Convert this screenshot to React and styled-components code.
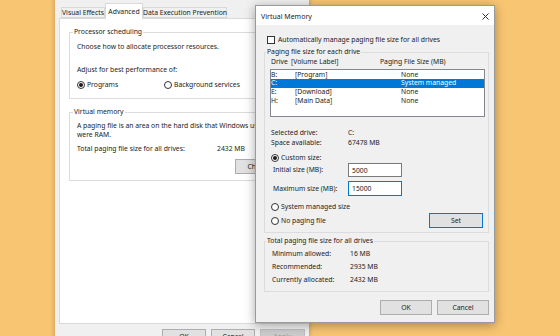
import React from 'react';
import styled, { createGlobalStyle } from 'styled-components';

const GlobalStyle = createGlobalStyle`
  html, body { margin: 0; padding: 0; }
  body {
    width: 560px;
    height: 336px;
    overflow: hidden;
    background: #F8C572;
    font-family: "Noto Sans", "Liberation Sans", sans-serif;
    font-size: 6.8px;
    color: #1b1b1b;
  }
  * { box-sizing: border-box; }
`;

const Desktop = styled.div`
  position: relative;
  width: 560px;
  height: 336px;
  overflow: hidden;
`;

// System Properties window (behind)
const BackWindow = styled.div`
  position: absolute;
  left: 55px;
  top: -10px;
  width: 254px;
  height: 380px;
  padding-top: 13px;
  background: #F0F0F0;
  box-shadow: 0 0 5px rgba(0, 0, 0, 0.25);
`;

const TabStrip = styled.div`
  display: flex;
  align-items: flex-end;
  height: 15px;
  margin-left: 6px;
  position: relative;
  z-index: 1;
`;

const Tab = styled.div`
  width: ${p => p.$w}px;
  height: ${p => (p.$active ? 16 : 11)}px;
  margin-bottom: ${p => (p.$active ? -1 : 0)}px;
  border: 1px solid #D9D9D9;
  border-bottom: ${p => (p.$active ? 'none' : '1px solid #D9D9D9')};
  background: ${p => (p.$active ? '#FFFFFF' : '#F0F0F0')};
  display: flex;
  align-items: center;
  justify-content: center;
  line-height: 9px;
  white-space: nowrap;
`;

const Panel = styled.div`
  margin-left: 4px;
  width: 249px;
  height: 306px;
  padding: 8px 9px 0;
  background: #FFFFFF;
  border: 1px solid #D9D9D9;
`;

const Group = styled.fieldset`
  margin: ${p => p.$top || 0}px 0 0;
  padding: 0 ${p => p.$right || 7}px ${p => p.$bottom || 8}px ${p => p.$left || 7}px;
  border: 1px solid #DCDCDC;
  min-width: 0;
`;

const Legend = styled.legend`
  margin-left: ${p => p.$shift || -4}px;
  padding: 0 1px;
  line-height: 10px;
`;

const Line = styled.div`
  margin-top: ${p => p.$top || 0}px;
  line-height: ${p => p.$lh || 10}px;
  padding-left: ${p => p.$indent || 0}px;
  white-space: nowrap;
`;

const Row = styled.div`
  display: grid;
  grid-template-columns: ${p => p.$cols};
  align-items: center;
  margin-top: ${p => p.$top || 0}px;
  padding-left: ${p => p.$indent || 0}px;
  line-height: 10px;
  height: ${p => p.$h || 10}px;
  white-space: nowrap;
`;

const RadioLabel = styled.label`
  display: flex;
  align-items: center;
  gap: 2px;
  white-space: nowrap;
`;

const Radio = styled.span`
  width: 8px;
  height: 8px;
  border-radius: 50%;
  border: 1px solid #333333;
  background: #FFFFFF;
  display: flex;
  align-items: center;
  justify-content: center;
  &::after {
    content: '';
    width: 4px;
    height: 4px;
    border-radius: 50%;
    background: ${p => (p.$on ? '#1b1b1b' : 'transparent')};
  }
`;

const Check = styled.span`
  width: 8px;
  height: 8px;
  border: 1px solid #333333;
  background: #FFFFFF;
`;

const ButtonRow = styled.div`
  display: flex;
  justify-content: flex-end;
  align-items: center;
  gap: 5px;
  margin-top: ${p => p.$top || 0}px;
  padding-right: ${p => p.$right || 0}px;
`;

const Button = styled.div`
  width: ${p => p.$w || 52}px;
  height: 15px;
  margin-right: ${p => p.$mr || 0}px;
  display: flex;
  align-items: center;
  justify-content: center;
  background: ${p => (p.$disabled ? '#CCCCCC' : '#E1E1E1')};
  border: 1px solid ${p => (p.$default ? '#0078D7' : p.$disabled ? '#BFBFBF' : '#ADADAD')};
  color: ${p => (p.$disabled ? '#9A9A9A' : '#1b1b1b')};
  white-space: nowrap;
`;

// Virtual Memory dialog (front)
const Dialog = styled.div`
  position: absolute;
  left: 255px;
  top: 5px;
  width: 240px;
  height: 318px;
  display: flex;
  flex-direction: column;
  background: #F0F0F0;
  border: 1px solid #9A9A9A;
  box-shadow: 0 2px 10px rgba(0, 0, 0, 0.35);
`;

const TitleBar = styled.div`
  height: 19px;
  flex: none;
  background: #FFFFFF;
  display: flex;
  align-items: center;
  justify-content: space-between;
  padding: 1px 5px 0 5px;
  font-size: 7px;
`;

const Body = styled.div`
  padding: 10px 5px 0 8px;
`;

const CheckRow = styled.label`
  display: flex;
  align-items: center;
  gap: 3px;
  height: 9px;
  margin-left: 3px;
  white-space: nowrap;
`;

const List = styled.div`
  margin-top: 2px;
  height: 48px;
  padding-top: 0.5px;
  background: #FFFFFF;
  border: 1px solid #828790;
`;

const ListItem = styled.div`
  display: grid;
  grid-template-columns: 24px 106px auto;
  height: 8.7px;
  line-height: 8.7px;
  background: ${p => (p.$sel ? '#0078D7' : 'transparent')};
  color: ${p => (p.$sel ? '#FFFFFF' : '#1b1b1b')};
  white-space: nowrap;
`;

const SizeInput = styled.input`
  width: 54px;
  height: ${p => p.$h || 14}px;
  padding: 0 0 0 3px;
  margin: 0;
  font: inherit;
  color: #1b1b1b;
  background: #FFFFFF;
  border: 1px solid ${p => (p.$focus ? '#0078D7' : '#7A7A7A')};
  outline: none;
`;

const CloseIcon = () => (
  <svg width="7" height="7" viewBox="0 0 7 7">
    <path d="M0.5 0.5 L6.5 6.5 M6.5 0.5 L0.5 6.5" stroke="#333" strokeWidth="1" />
  </svg>
);

const drives = [
  { d: 'B:', label: '[Program]', size: 'None' },
  { d: 'C:', label: '', size: 'System managed', sel: true },
  { d: 'E:', label: '[Download]', size: 'None' },
  { d: 'H:', label: '[Main Data]', size: 'None' },
];

export default function App() {
  return (
    <Desktop>
      <GlobalStyle />
      <BackWindow>
        <TabStrip>
          <Tab $w={44}>Visual Effects</Tab>
          <Tab $w={38} $active>Advanced</Tab>
          <Tab $w={84}>Data Execution Prevention</Tab>
        </TabStrip>
        <Panel>
          <Group $left={7} $bottom={8}>
            <Legend>Processor scheduling</Legend>
            <Line $top={5}>Choose how to allocate processor resources.</Line>
            <Line $top={13}>Adjust for best performance of:</Line>
            <Row $top={5} $cols="87px auto">
              <RadioLabel><Radio $on />Programs</RadioLabel>
              <RadioLabel><Radio />Background services</RadioLabel>
            </Row>
          </Group>
          <Group $top={8} $bottom={6}>
            <Legend>Virtual memory</Legend>
            <Line $top={4} $lh={9}>
              A paging file is an area on the hard disk that Windows uses as if it
              <br />
              were RAM.
            </Line>
            <Row $top={5} $cols="140px auto">
              <span>Total paging file size for all drives:</span>
              <span>2432 MB</span>
            </Row>
            <ButtonRow $top={5}>
              <Button $w={55}>Change...</Button>
            </ButtonRow>
          </Group>
        </Panel>
        <ButtonRow $top={5} $right={4}>
          <Button $w={44}>OK</Button>
          <Button $w={44}>Cancel</Button>
          <Button $w={45} $disabled>Apply</Button>
        </ButtonRow>
      </BackWindow>

      <Dialog>
        <TitleBar>
          <span>Virtual Memory</span>
          <CloseIcon />
        </TitleBar>
        <Body>
          <CheckRow><Check />Automatically manage paging file size for all drives</CheckRow>

          <Group $top={3} $left={5} $right={3} $bottom={5}>
            <Legend>Paging file size for each drive</Legend>
            <Row $cols="20px 89px auto" $indent={1}>
              <span>Drive</span>
              <span>[Volume Label]</span>
              <span>Paging File Size (MB)</span>
            </Row>
            <List>
              {drives.map(item => (
                <ListItem key={item.d} $sel={item.sel}>
                  <span>{item.d}</span>
                  <span>{item.label}</span>
                  <span>{item.size}</span>
                </ListItem>
              ))}
            </List>
            <Row $top={11} $cols="77px auto" $indent={1}>
              <span>Selected drive:</span>
              <span>C:</span>
            </Row>
            <Row $cols="77px auto" $indent={1}>
              <span>Space available:</span>
              <span>67478 MB</span>
            </Row>
            <Row $top={5} $cols="auto" $indent={1}>
              <RadioLabel><Radio $on />Custom size:</RadioLabel>
            </Row>
            <Row $cols="75px auto" $indent={3} $h={14}>
              <span>Initial size (MB):</span>
              <SizeInput readOnly value="5000" />
            </Row>
            <Row $top={4} $cols="75px auto" $indent={3} $h={15}>
              <span>Maximum size (MB):</span>
              <SizeInput readOnly value="15000" $h={15} $focus />
            </Row>
            <Row $top={6} $cols="auto" $indent={1}>
              <RadioLabel><Radio />System managed size</RadioLabel>
            </Row>
            <Row $top={1} $cols="1fr auto" $indent={1} $h={14}>
              <RadioLabel><Radio />No paging file</RadioLabel>
              <Button $w={54} $mr={2} $default>Set</Button>
            </Row>
          </Group>

          <Group $top={3} $left={5} $right={3} $bottom={6}>
            <Legend>Total paging file size for all drives</Legend>
            <Row $top={3} $cols="78px auto" $indent={2}>
              <span>Minimum allowed:</span>
              <span>16 MB</span>
            </Row>
            <Row $top={3} $cols="78px auto" $indent={2}>
              <span>Recommended:</span>
              <span>2935 MB</span>
            </Row>
            <Row $top={3} $cols="78px auto" $indent={2}>
              <span>Currently allocated:</span>
              <span>2432 MB</span>
            </Row>
          </Group>

          <ButtonRow $top={8}>
            <Button>OK</Button>
            <Button>Cancel</Button>
          </ButtonRow>
        </Body>
      </Dialog>
    </Desktop>
  );
}
